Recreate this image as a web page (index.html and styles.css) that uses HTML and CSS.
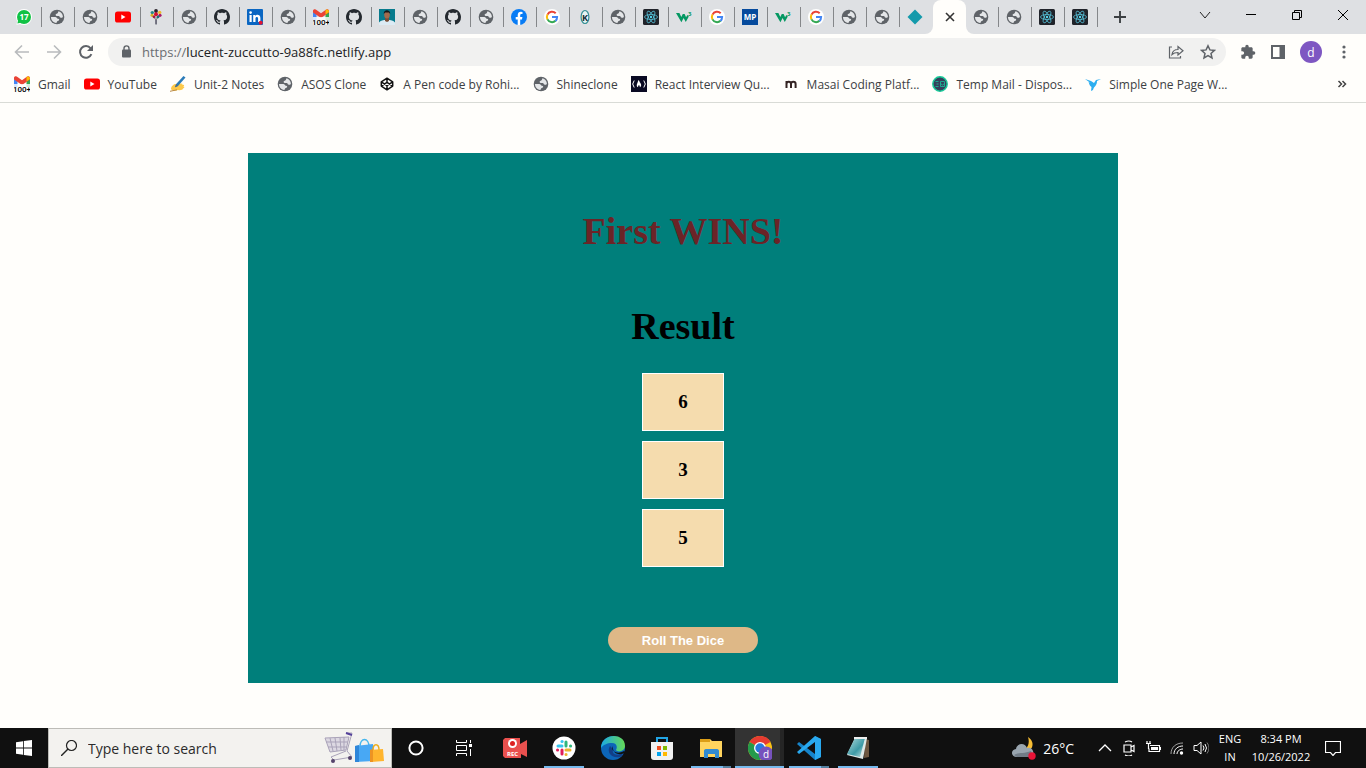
FILE: index.html
```html
<!DOCTYPE html>
<html lang="en">
<head>
<meta charset="utf-8">
<meta name="viewport" content="width=device-width, initial-scale=1">
<title>Roll The Dice</title>
<link rel="stylesheet" href="styles.css">
</head>
<body>
<svg class="sprite" aria-hidden="true">
  <symbol id="globe" viewBox="0 0 16 16"><circle cx="8" cy="8" r="7.300" fill="#5f6368"/><path d="M9.500 2.300c2.500.6 4.300 2.700 4.400 5.200 0 1.200-1.600 1.700-2.600 1.100-.8-.5-.5-1.400-1.500-1.600H7.600c-1.400-.1-1.200-2.100.2-2.200 1.400-.2 1-1.800 1.700-2.500zM2 8h4.300c1.500 0 1.400 1.700 2.700 1.800 1.600.1 1.700 2-.2 2.100-1 .1-.7 1.500-1.600 2C4.200 13.600 2 11.200 2 8z" fill="#e4e6e8"/></symbol>
  <symbol id="github" viewBox="0 0 16 16"><path fill="#24292f" d="M8 0C3.58 0 0 3.58 0 8c0 3.54 2.29 6.53 5.47 7.59.4.07.55-.17.55-.38 0-.19-.01-.82-.01-1.49-2.01.37-2.53-.49-2.69-.94-.09-.23-.48-.94-.82-1.13-.28-.15-.68-.52-.01-.53.63-.01 1.08.58 1.23.82.72 1.21 1.87.87 2.33.66.07-.52.28-.87.51-1.07-1.78-.2-3.64-.89-3.64-3.95 0-.87.31-1.59.82-2.15-.08-.2-.36-1.02.08-2.12 0 0 .67-.21 2.2.82.64-.18 1.32-.27 2-.27s1.36.09 2 .27c1.53-1.04 2.2-.82 2.2-.82.44 1.1.16 1.92.08 2.12.51.56.82 1.27.82 2.15 0 3.07-1.87 3.75-3.65 3.95.29.25.54.73.54 1.48 0 1.07-.01 1.93-.01 2.2 0 .21.15.46.55.38A8.010 8.010 0 0 0 16 8c0-4.42-3.58-8-8-8z"/></symbol>
  <symbol id="youtube" viewBox="0 0 16 16"><rect y="2.500" width="16" height="11" rx="2.600" fill="#f00"/><path d="M6.300 5.600v4.800L10.500 8z" fill="#fff"/></symbol>
  <symbol id="whatsapp" viewBox="0 0 16 16"><circle cx="8" cy="8" r="8" fill="#fff"/><path d="M.4 15.800l1-3.800 3 3z" fill="#fff"/><circle cx="8" cy="8" r="7" fill="#11c245"/><path d="M1.400 14.600l1-4 3 3z" fill="#11c245"/><text x="8" y="11" text-anchor="middle" font-size="8" font-weight="700" fill="#fff">17</text></symbol>
  <symbol id="balloons" viewBox="0 0 16 16"><path d="M4.500 7L8 11l3.500-4M8 8v7" stroke="#777" stroke-width=".8" fill="none"/><circle cx="4.300" cy="3.600" r="1.700" fill="#268a8a"/><circle cx="11.700" cy="3.400" r="1.700" fill="#f0b929"/><circle cx="8" cy="2" r="1.900" fill="#292129"/><circle cx="8" cy="5.200" r="2" fill="#d8122f"/><circle cx="4" cy="6.300" r="1.500" fill="#d6b21c"/><circle cx="12" cy="6.300" r="1.600" fill="#a6196b"/><circle cx="6" cy="7.800" r="1.400" fill="#a41742"/><circle cx="10" cy="7.900" r="1.400" fill="#1c7474"/><path d="M7.200 11h1.700v4.500H7.300z" fill="#667"/></symbol>
  <symbol id="linkedin" viewBox="0 0 16 16"><rect width="16" height="16" rx="1" fill="#0a66c2"/><path d="M2.500 6h2.200v7H2.500zM6.200 6h2.100v1c1.200-1.900 5.100-1.600 5.100 2v4h-2.300V9.500c0-2-2.600-2-2.600 0V13H6.200z" fill="#fff"/><circle cx="3.600" cy="3.600" r="1.300" fill="#fff"/><circle cx="13.700" cy="13.700" r="2" fill="#e11432"/></symbol>
  <symbol id="gmail" viewBox="0 0 16 16"><path d="M0 3l3.500 2v6H0z" fill="#4285f4"/><path d="M16 3l-3.500 2v6H16z" fill="#34a853"/><path d="M0 1.500C.6 0 2.500 0 3.500.9L8 4.200 12.500.9C13.500 0 15.400 0 16 1.500v2L8 9 0 3.500z" fill="#ea4335"/><path d="M12.500 1C14 0 16 .5 16 3l-3.500 2.500z" fill="#fbbc04"/><rect y="8" width="16" height="8" fill="#fff" opacity=".8"/><text class="badge-text" x="8" y="15.500" text-anchor="middle" fill="#000">100+</text></symbol>
  <symbol id="portrait" viewBox="0 0 16 16"><path fill="#087b8d" d="M0 0h16v16H0z"/><path d="M0 16v-2.500c1.500-2 4-2.500 8-2.500s6.500.5 8 2.500V16z" fill="#dcebf4"/><path d="M6 8h4v4l-2 1-2-1z" fill="#7b4f39"/><ellipse cx="8" cy="5.700" rx="2.800" ry="3.800" fill="#a56a4c"/><path d="M4.800 5C4.300 0 11.600 0 11.200 5L10 3.400H6z" fill="#161719"/></symbol>
  <symbol id="facebook" viewBox="0 0 16 16"><circle cx="8" cy="8" r="8" fill="#087cf5"/><path d="M6.700 16v-5.600H4.700V8h2V6.200c0-2.300 1.300-3.400 3.200-3.400l1.600.1V5h-1c-1 0-1.300.6-1.300 1.300V8h2.200l-.4 2.400H9.200V16z" fill="#fff"/></symbol>
  <symbol id="google" viewBox="0 0 16 16"><circle cx="8" cy="8" r="8" fill="#fff"/><path d="M11.700 4.300A5.100 5.100 0 0 0 3.500 5.600" fill="none" stroke="#ea4335" stroke-width="2"/><path d="M3.500 5.500A5.200 5.200 0 0 0 3.500 10.500" fill="none" stroke="#fbbc05" stroke-width="2"/><path d="M3.500 10.400A5.100 5.100 0 0 0 11.500 11.800" fill="none" stroke="#34a853" stroke-width="2"/><path d="M8 8h5.100c0 1.500-.5 2.900-1.600 3.900" fill="none" stroke="#4285f4" stroke-width="2"/></symbol>
  <symbol id="kay" viewBox="0 0 16 16"><ellipse cx="8" cy="8" rx="3.900" ry="6.500" fill="#e7f3f3" stroke="#338e93" stroke-width="1.200"/><text x="8" y="11.500" text-anchor="middle" font-size="9" font-weight="700" fill="#142a34">K</text></symbol>
  <symbol id="react" viewBox="0 0 16 16"><rect width="16" height="16" rx="1.500" fill="#20232a"/><g fill="none" stroke="#55bfd6" stroke-width=".8"><ellipse cx="8" cy="8" rx="6.500" ry="2.500"/><ellipse cx="8" cy="8" rx="6.500" ry="2.500" transform="rotate(60 8 8)"/><ellipse cx="8" cy="8" rx="6.500" ry="2.500" transform="rotate(120 8 8)"/></g><circle cx="8" cy="8" r="1.200" fill="#55d7ee"/></symbol>
  <symbol id="wthree" viewBox="0 0 16 16"><path d="M0 4h3.400l1.900 4 1.500-3h1.800l1.500 3.200L11.300 6l1.500 1.500-3 5.500-2.200-4-2.200 4.200z" fill="#059862"/><text x="12" y="7" font-size="6" font-weight="700" fill="#059862">3</text></symbol>
  <symbol id="mp" viewBox="0 0 16 16"><path fill="#064a9d" d="M0 0h16v16H0z"/><text x="8" y="11" text-anchor="middle" font-size="8" font-weight="700" fill="#fff">MP</text></symbol>
  <symbol id="diamond" viewBox="0 0 16 16"><path d="M8 .5L15.500 8 8 15.500.5 8z" fill="#149aab"/></symbol>
  <symbol id="writing" viewBox="0 0 16 16"><path d="M1 13c0-3 3-5 5-5l5-.5c2 0 2 1 .5 1.500 3-1 3.500.5 1.500 1.500 2 0 1.500 1.700 0 2 0 1.500-3 2-5 1.500-3 1-6 1-7-1z" fill="#fcc94b"/><path d="M0 15.300l7-1.500" stroke="#b98a45"/><path d="M13.500 0l2 1.500L8 10l-3 1.300L6.200 8z" fill="#2b7bb8"/><path d="M5 11.300L6.200 8 8 10z" fill="#506b7f"/></symbol>
  <symbol id="codepen" viewBox="0 0 16 16"><path d="M8 2.200l5.700 3.700v4.200L8 13.800l-5.700-3.700V5.900zM2.300 5.900L8 9.700l5.700-3.800M2.300 10.100L8 6.300l5.700 3.800M8 2.200v4.100M8 9.700v4.100" fill="none" stroke="#111" stroke-width="1.500" stroke-linejoin="round"/></symbol>
  <symbol id="camp" viewBox="0 0 16 16"><path fill="#0a0a23" d="M0 0h16v16H0z"/><path d="M3.200 4.500Q.2 8 3.200 11.500M12.800 4.500q3 3.500 0 7" stroke="#fff" fill="none"/><path d="M7.400 4c1.500 1 .8 2.400 1.800 2.800.8 1 1.800 3-.2 4.500-.4-1-.2-1.600-1-2.300-.8.700-1 1.400-.9 2.300-2.800-1.600-.3-4.300.3-7.300z" fill="#fff"/></symbol>
  <symbol id="masai" viewBox="0 0 16 16"><path d="M3.500 12V5M3.500 8c0-3 4.500-3 4.500 0v4M8 8c0-3 4.600-3 4.600 0v4" fill="none" stroke="#342323" stroke-width="2"/></symbol>
  <symbol id="temp" viewBox="0 0 16 16"><circle cx="8" cy="8" r="7.200" fill="#35405b" stroke="#18ca99" stroke-width="1.500"/><path d="M3.500 5.500h3M4.500 8h2M3.500 10.500h3M8.500 5.500h4v5h-4zM8.500 7.500l2 1.500 2-1.500" fill="none" stroke="#18c39c" stroke-width=".8"/></symbol>
  <symbol id="bird" viewBox="0 0 16 16"><path d="M0 3l6 2 3 2 2-3 5-1-4 2c0 5-3 5-4 9l-2 1 .500-4c-2-1-2-3-3-5l2 1z" fill="#2caef0"/></symbol>
</svg>

<header class="browser">
  <div class="tabstrip">
    <nav class="tabs" aria-label="Open tabs">
      <button class="tab" aria-label="WhatsApp"><svg class="fav"><use href="#whatsapp"/></svg></button>
      <button class="tab" aria-label="Site"><svg class="fav"><use href="#globe"/></svg></button>
      <button class="tab" aria-label="Site"><svg class="fav"><use href="#globe"/></svg></button>
      <button class="tab" aria-label="YouTube"><svg class="fav"><use href="#youtube"/></svg></button>
      <button class="tab" aria-label="Balloons"><svg class="fav"><use href="#balloons"/></svg></button>
      <button class="tab" aria-label="Site"><svg class="fav"><use href="#globe"/></svg></button>
      <button class="tab" aria-label="GitHub"><svg class="fav"><use href="#github"/></svg></button>
      <button class="tab" aria-label="LinkedIn"><svg class="fav"><use href="#linkedin"/></svg></button>
      <button class="tab" aria-label="Site"><svg class="fav"><use href="#globe"/></svg></button>
      <button class="tab" aria-label="Gmail"><svg class="fav"><use href="#gmail"/></svg></button>
      <button class="tab" aria-label="GitHub"><svg class="fav"><use href="#github"/></svg></button>
      <button class="tab" aria-label="Portfolio"><svg class="fav"><use href="#portrait"/></svg></button>
      <button class="tab" aria-label="Site"><svg class="fav"><use href="#globe"/></svg></button>
      <button class="tab" aria-label="GitHub"><svg class="fav"><use href="#github"/></svg></button>
      <button class="tab" aria-label="Site"><svg class="fav"><use href="#globe"/></svg></button>
      <button class="tab" aria-label="Facebook"><svg class="fav"><use href="#facebook"/></svg></button>
      <button class="tab" aria-label="Google"><svg class="fav"><use href="#google"/></svg></button>
      <button class="tab" aria-label="K"><svg class="fav"><use href="#kay"/></svg></button>
      <button class="tab" aria-label="Site"><svg class="fav"><use href="#globe"/></svg></button>
      <button class="tab" aria-label="React"><svg class="fav"><use href="#react"/></svg></button>
      <button class="tab" aria-label="W3Schools"><svg class="fav"><use href="#wthree"/></svg></button>
      <button class="tab" aria-label="Google"><svg class="fav"><use href="#google"/></svg></button>
      <button class="tab" aria-label="MP"><svg class="fav"><use href="#mp"/></svg></button>
      <button class="tab" aria-label="W3Schools"><svg class="fav"><use href="#wthree"/></svg></button>
      <button class="tab" aria-label="Google"><svg class="fav"><use href="#google"/></svg></button>
      <button class="tab" aria-label="Site"><svg class="fav"><use href="#globe"/></svg></button>
      <button class="tab" aria-label="Site"><svg class="fav"><use href="#globe"/></svg></button>
      <button class="tab tab-last" aria-label="Netlify"><svg class="fav"><use href="#diamond"/></svg></button>
      <button class="tab tab-active" aria-label="Close tab"><svg class="fav" viewBox="0 0 16 16"><path d="M4 4l8 8M12 4l-8 8" stroke="#333" stroke-width="1.600"/></svg></button>
      <button class="tab tab-next" aria-label="Site"><svg class="fav"><use href="#globe"/></svg></button>
      <button class="tab" aria-label="Site"><svg class="fav"><use href="#globe"/></svg></button>
      <button class="tab" aria-label="React"><svg class="fav"><use href="#react"/></svg></button>
      <button class="tab" aria-label="React"><svg class="fav"><use href="#react"/></svg></button>
      <button class="new-tab" aria-label="New tab"><svg class="fav" viewBox="0 0 16 16"><path d="M8 2v12M2 8h12" stroke="#3c4043" stroke-width="1.900"/></svg></button>
    </nav>
    <div class="window-controls">
      <button aria-label="Search tabs"><svg class="fav" viewBox="0 0 16 16"><path d="M3 5l5 6 5-6" fill="none" stroke="#222"/></svg></button>
      <button aria-label="Minimize"><svg class="fav" viewBox="0 0 16 16"><path d="M3 7.500h10" stroke="#000"/></svg></button>
      <button aria-label="Restore"><svg class="fav" viewBox="0 0 16 16"><path d="M3.500 5.500h7v7h-7zM5.500 5V3.500h7v7H11" fill="none" stroke="#000"/></svg></button>
      <button aria-label="Close"><svg class="fav" viewBox="0 0 16 16"><path d="M3 3l10 10M13 3L3 13" stroke="#000"/></svg></button>
    </div>
  </div>

  <div class="toolbar">
    <div class="nav-buttons">
      <button aria-label="Back"><svg class="fav" viewBox="0 0 16 16"><path d="M15 8H2M8 1.500L1.500 8 8 14.500" fill="none" stroke="#b9bbbd" stroke-width="1.600"/></svg></button>
      <button aria-label="Forward"><svg class="fav" viewBox="0 0 16 16"><path d="M1 8h13M8 1.500L14.500 8 8 14.500" fill="none" stroke="#b9bbbd" stroke-width="1.600"/></svg></button>
      <button aria-label="Reload"><svg class="fav" viewBox="0 0 16 16"><path d="M13.400 10.200A5.900 5.900 0 1 1 12.600 4.300" fill="none" stroke="#5f6368" stroke-width="2"/><path d="M15 1v6H9z" fill="#5f6368"/></svg></button>
    </div>
    <div class="omnibox">
      <svg class="fav" viewBox="0 0 16 16"><rect x="4" y="5.500" width="9" height="8" rx="1" fill="#5f6368"/><path d="M6 6V4.400a2.500 2.500 0 0 1 5 0V6" fill="none" stroke="#5f6368" stroke-width="1.400"/></svg>
      <div class="url" aria-label="Address"><span>https://</span>lucent-zuccutto-9a88fc.netlify.app</div>
      <button aria-label="Share"><svg class="fav" viewBox="0 0 16 16"><path d="M4 3H1.500v11h11v-2M4 10.500c.5-3.500 2.500-5 6-5V2.500l5 4.200-5 4.300V8.500c-3 0-4.500.5-6 2z" fill="none" stroke="#5f6368" stroke-width="1.200"/></svg></button>
      <button aria-label="Bookmark"><svg class="fav" viewBox="0 0 16 16"><path d="M8 1.800l1.900 4.100 4.500.5-3.400 3 1 4.500L8 11.600l-4 2.300 1-4.500-3.400-3 4.500-.5z" fill="none" stroke="#5f6368" stroke-width="1.500"/></svg></button>
    </div>
    <div class="tools">
      <button aria-label="Extensions"><svg class="fav" viewBox="0 0 24 24"><path fill="#5f6368" d="M20.500 11H19V7c0-1.100-.9-2-2-2h-4V3.500a2.500 2.500 0 0 0-5 0V5H4c-1.100 0-2 .9-2 2v3.800h1.500a2.700 2.700 0 0 1 0 5.400H2V20c0 1.100.9 2 2 2h3.800v-1.500a2.700 2.700 0 0 1 5.400 0V22H17c1.100 0 2-.9 2-2v-4h1.500a2.500 2.500 0 0 0 0-5z"/></svg></button>
      <button aria-label="Side panel"><svg class="fav" viewBox="0 0 16 16"><path d="M2 2h12v12H2z" fill="none" stroke="#5f6368" stroke-width="2"/><path d="M9.500 2H14v12H9.500z" fill="#5f6368"/></svg></button>
      <button class="avatar" aria-label="Profile">d</button>
      <button aria-label="Menu"><svg class="fav" viewBox="0 0 16 16"><g fill="#5f6368"><circle cx="8" cy="3" r="1.600"/><circle cx="8" cy="8" r="1.600"/><circle cx="8" cy="13" r="1.600"/></g></svg></button>
    </div>
  </div>

  <nav class="bookmarks" aria-label="Bookmarks">
    <a href="#"><svg class="fav"><use href="#gmail"/></svg>Gmail</a>
    <a href="#"><svg class="fav"><use href="#youtube"/></svg>YouTube</a>
    <a href="#"><svg class="fav"><use href="#writing"/></svg>Unit-2 Notes</a>
    <a href="#"><svg class="fav"><use href="#globe"/></svg>ASOS Clone</a>
    <a href="#"><svg class="fav"><use href="#codepen"/></svg>A Pen code by Rohi...</a>
    <a href="#"><svg class="fav"><use href="#globe"/></svg>Shineclone</a>
    <a href="#"><svg class="fav"><use href="#camp"/></svg>React Interview Qu...</a>
    <a href="#"><svg class="fav"><use href="#masai"/></svg>Masai Coding Platf...</a>
    <a href="#"><svg class="fav"><use href="#temp"/></svg>Temp Mail - Dispos...</a>
    <a href="#"><svg class="fav"><use href="#bird"/></svg>Simple One Page W...</a>
    <button class="overflow" aria-label="More bookmarks"><svg class="fav" viewBox="0 0 16 16"><path d="M4.500 5l3 3-3 3M8.500 5l3 3-3 3" fill="none" stroke="#444" stroke-width="1.500"/></svg></button>
  </nav>
</header>

<main class="page">
  <section class="game">
    <h1 class="winner">First WINS!</h1>
    <h1 class="heading">Result</h1>
    <div class="dice">
      <div class="die">6</div>
      <div class="die">3</div>
      <div class="die">5</div>
    </div>
    <button class="roll">Roll The Dice</button>
  </section>
</main>

<footer class="taskbar">
  <button class="start" aria-label="Start"><svg class="fav" viewBox="0 0 16 16"><path d="M0 2.200l7-1v6.400H0zM7.800 1.100L16 0v7.600H7.800zM0 8.400h7v6.400l-7-1zM7.800 8.400H16V16l-8.200-1.100z" fill="#fff"/></svg></button>
  <div class="search">
    <svg class="fav" viewBox="0 0 16 16"><circle cx="10.500" cy="5.500" r="5" fill="none" stroke="#222" stroke-width="1.200"/><path d="M7 9L0 16" stroke="#222" stroke-width="1.400"/></svg>
    <input type="text" aria-label="Search" placeholder="Type here to search">
    <svg class="shopping" viewBox="0 0 60 32"><path d="M1 6l24-1-3 13-16 2z" fill="#dcd8e2"/><path d="M1 6l24-1-3 13-16 2zM2 10h22M4 15h19M6 6l3 13M11 6l2 13M16 6l1 12M20 5v13M22 1h6l-5 18 5 6-18 3-3-3 15-6" fill="none" stroke="#aaa3b9"/><path d="M22 1l6 2" stroke="#54419a" stroke-width="2"/><circle cx="9" cy="29" r="2" fill="#54436b"/><circle cx="26" cy="26" r="2" fill="#54436b"/><path d="M36 15c0-10 9-10 9 0" fill="none" stroke="#45b6ed" stroke-width="1.500"/><path d="M31 14l18-2 1 17-19 1z" fill="#48a8f4"/><path d="M31 14l4-1v17h-4z" fill="#2e86d9"/><path d="M49 18c0-7 6-7 6 0" fill="none" stroke="#efad18" stroke-width="1.500"/><path d="M46 18l13-1 1 12-13 1z" fill="#ffb52e"/><path d="M46 18l3-1v13h-3z" fill="#ed9423"/></svg>
  </div>
  <button class="shell" aria-label="Cortana"><svg class="fav" viewBox="0 0 16 16"><circle cx="8" cy="8" r="6.600" fill="none" stroke="#fff" stroke-width="2"/></svg></button>
  <button class="shell" aria-label="Task view"><svg class="fav" viewBox="0 0 16 16"><path d="M.5 0v2.500h10V0M.5 5.500h10v5H.5zM.5 16v-2.500h10V16M14.500 0v3M14.500 9v7" fill="none" stroke="#fff"/><path d="M13 4h3v3h-3z" fill="#fff"/></svg></button>
  <div class="apps">
    <button class="app" aria-label="Recorder"><svg class="app-icon" viewBox="0 0 24 24"><path d="M2 2h15v6l7-4v17l-6-3v4H2L0 20V4z" fill="#e9504e"/><circle cx="9.500" cy="7.500" r="4.500" fill="#fff"/><circle cx="9.500" cy="7.500" r="2.500" fill="#d22"/><text x="9.500" y="20" text-anchor="middle" font-size="6" font-weight="700" fill="#fff">REC</text></svg></button>
    <button class="app open" aria-label="Slack"><svg class="app-icon" viewBox="0 0 24 24"><circle cx="12" cy="12" r="11.500" fill="#fff"/><g fill="none" stroke-width="3" stroke-linecap="round"><path d="M6 10h4" stroke="#36c5f0"/><path d="M10 5.500h.1" stroke="#36c5f0"/><path d="M14 6v4" stroke="#2eb67d"/><path d="M18.500 10h.1" stroke="#2eb67d"/><path d="M14 14h4M14 18.500h.1" stroke="#ecb22e"/><path d="M10 14v4M5.500 14h.1" stroke="#e01e5a"/></g></svg></button>
    <button class="app" aria-label="Edge"><svg class="app-icon" viewBox="0 0 24 24"><defs><linearGradient id="edge-top"><stop stop-color="#1ba9e4"/><stop offset="1" stop-color="#65d957"/></linearGradient></defs><circle cx="12" cy="12" r="12" fill="#0c65b8"/><path d="M0 12C0-3 24-4 24 10c0 5-7 7-9 4 2-4 0-7-4-7C6 7 2 9 0 12z" fill="url(#edge-top)"/><path d="M9 10c-4 6 2 13 10 11 3-1 3-4 1-3-7 2-9-1-8-5z" fill="#123e87"/><path d="M12 10c-3 5 4 9 11 5l2 2c-8 3-14 0-13-7z" fill="#101010"/></svg></button>
    <button class="app" aria-label="Store"><svg class="app-icon" viewBox="0 0 24 24"><path d="M7 7V2h10v5" fill="none" stroke="#22a5e5" stroke-width="2"/><path d="M1 6h22v15c0 2-1 3-3 3H4c-2 0-3-1-3-3z" fill="#f1f1f1"/><path d="M7 10h4v4H7z" fill="#f25022"/><path d="M13 10h4v4h-4z" fill="#7fba00"/><path d="M7 16h4v4H7z" fill="#00a4ef"/><path d="M13 16h4v4h-4z" fill="#ffb900"/></svg></button>
    <button class="app open multi" aria-label="File Explorer"><svg class="app-icon" viewBox="0 0 24 24"><path d="M1 3h10l2 2h10v16H1z" fill="#ffd45e"/><path d="M1 3h10v3H1z" fill="#dc9e17"/><path d="M5 22v-7c0-1 .5-2 2-2h11c1.500 0 2 1 2 2v7h-4v-4H9v4z" fill="#328bd0"/></svg></button>
    <button class="app open multi current" aria-label="Chrome"><svg class="app-icon" viewBox="0 0 24 24"><circle cx="12" cy="12" r="12" fill="#fbc116"/><path d="M12 12L1.600 6A12 12 0 0 1 22.400 6z" fill="#e53b31"/><path d="M12 12L1.600 6A12 12 0 0 0 12 24l5-9z" fill="#249b4b"/><circle cx="12" cy="12" r="6" fill="#fff"/><circle cx="12" cy="12" r="4.700" fill="#2779df"/><circle cx="18" cy="18" r="7.500" fill="#7652bd"/><text x="18" y="21.500" text-anchor="middle" font-size="10" fill="#fff">d</text></svg></button>
    <button class="app open multi" aria-label="Visual Studio Code"><svg class="app-icon" viewBox="0 0 24 24"><path d="M18 0l6 3v18l-6 3L0 8l2-2 16 12z" fill="#1684ca"/><path d="M18 0l6 3v18l-6 3V6L2 18l-2-2z" fill="#29a9ef"/></svg></button>
    <button class="app open" aria-label="Notepad"><svg class="app-icon" viewBox="0 0 24 24"><defs><linearGradient id="note" x2="1" y2="1"><stop stop-color="#b7dedf"/><stop offset=".6" stop-color="#3c9aa6"/><stop offset="1" stop-color="#c9e6e6"/></linearGradient></defs><path d="M19 3l4 1v17l-5 1z" fill="#6d5640"/><path d="M9 2h12l-4 21L1 19z" fill="#dfe9e8"/><path d="M9 2h10l-5 19L1 18z" fill="url(#note)"/><path d="M8 2h13" stroke="#eee" stroke-width="2"/></svg></button>
  </div>
  <div class="tray">
    <div class="weather"><svg class="app-icon" viewBox="0 0 24 24"><path d="M16 1c8 5 5 16-5 14 5-3 7-8 5-14z" fill="#f8be34"/><path d="M5 21c-6 0-7-7-1-8 1-6 9-7 11-1 7-2 9 9 2 9z" fill="#99a5af"/><path d="M2 19c4-3 10-1 17-4 2 4 0 6-3 6H5z" fill="#717c87"/><circle cx="20" cy="20" r="3.700" fill="#e81437"/></svg><span>26°C</span></div>
    <div class="status">
      <button aria-label="Show hidden icons"><svg class="fav" viewBox="0 0 16 16"><path d="M2 11l6-6 6 6" fill="none" stroke="#fff" stroke-width="1.300"/></svg></button>
      <button aria-label="Meet now"><svg class="fav" viewBox="0 0 16 16"><path d="M3 5h7v7H3zM10 7l3-1.500v6L10 10M4 2q4-2 7 0M4 15q4 2 7 0" fill="none" stroke="#fff" stroke-width="1.200"/></svg></button>
      <button aria-label="Battery"><svg class="fav" viewBox="0 0 16 16"><path d="M5 5.500h9.500v6H4v-3M1 3.500h5M2 1v3M5 1v3M3.500 4v5" fill="none" stroke="#fff" stroke-width="1.200"/><path d="M6 7h7v3H6zM15 7h1v3h-1z" fill="#fff"/></svg></button>
      <button aria-label="Wi-Fi"><svg class="fav" viewBox="0 0 16 16"><g fill="none" stroke="#fff"><path d="M2 14C2 7 7 3 14 3" opacity=".6"/><path d="M5 14c0-5 4-8 9-8M8 14c0-3 3-5 6-5"/></g><circle cx="12.500" cy="13" r="1.700" fill="#fff"/></svg></button>
      <button aria-label="Volume"><svg class="fav" viewBox="0 0 16 16"><path d="M1 5.500h3L8 2v12l-4-3.500H1zM10 5.500q2 2.500 0 5M12 4q3 4 0 8" fill="none" stroke="#fff"/><path d="M14 2.500q4 5.500 0 11" fill="none" stroke="#777"/></svg></button>
    </div>
    <div class="stack lang"><span>ENG</span><span>IN</span></div>
    <div class="stack clock"><span>8:34 PM</span><span>10/26/2022</span></div>
    <button class="notify" aria-label="Notifications"><svg class="fav" viewBox="0 0 16 16"><path d="M.5 1.500h15v11h-5L8 15.500l-2.500-3h-5z" fill="none" stroke="#fff" stroke-width="1.200"/></svg></button>
  </div>
</footer>
</body>
</html>
```
FILE: styles.css
```css
* { box-sizing: border-box; }

body {
  margin: 0;
  min-height: 100vh;
  display: flex;
  flex-direction: column;
  background: #fffefb;
  font-family: "Open Sans", "Noto Sans", sans-serif;
  font-size: 12px;
  color: #3c4043;
}

button {
  margin: 0;
  padding: 0;
  border: 0;
  background: none;
  font: inherit;
  color: inherit;
  display: flex;
  align-items: center;
  justify-content: center;
  flex: none;
}

svg { display: block; flex: none; }
.sprite { display: none; }
.fav { width: 16px; height: 16px; }
.badge-text { font: 500 8px Roboto, sans-serif; }

/* Browser frame */
.browser { border-bottom: 1px solid #d9dbd6; }

.tabstrip {
  display: flex;
  justify-content: space-between;
  height: 34px;
  background: linear-gradient(#dee0e3 26px, #fffefb 26px);
}

.tabs {
  display: flex;
  padding-left: 9px;
  background: linear-gradient(#dee0e3, #dee0e3) 0 0 / 9px 100% no-repeat;
}

.tab {
  width: 33px;
  height: 34px;
  justify-content: flex-start;
  padding-left: 7px;
  background: linear-gradient(#85878a, #85878a) right 7px / 1px 20px no-repeat #dee0e3;
}

.tab-last {
  background: #dee0e3;
  border-bottom-right-radius: 8px;
}

.tab-next { border-bottom-left-radius: 8px; }

.tab-active {
  justify-content: center;
  padding-left: 1px;
  background: #fffefb;
  border-radius: 8px 8px 0 0;
}

.new-tab { width: 43px; height: 34px; background: #dee0e3; }

.window-controls {
  flex: 1;
  display: flex;
  justify-content: flex-end;
  background: #dee0e3;
}
.window-controls button { width: 46px; height: 29px; }

.toolbar {
  display: flex;
  align-items: center;
  height: 36px;
}

.nav-buttons { display: flex; gap: 16px; padding: 0 14px; }

.omnibox {
  flex: 1;
  display: flex;
  align-items: center;
  gap: 16px;
  height: 28px;
  padding: 0 10px;
  border-radius: 14px;
  background: #f1f1f0;
}

.url {
  flex: 1;
  margin-left: -8px;
  font-size: 13px;
  color: #202124;
}
.url span { color: #6b6e72; }

.tools {
  display: flex;
  align-items: center;
  gap: 14px;
  padding: 0 14px;
}

.avatar {
  width: 22px;
  height: 22px;
  border-radius: 50%;
  background: #7e57c2;
  color: #fff;
}

.bookmarks {
  display: flex;
  align-items: center;
  gap: 13px;
  height: 32px;
  padding: 0 16px 4px 14px;
}

.bookmarks a {
  display: flex;
  align-items: center;
  gap: 8px;
  color: inherit;
  text-decoration: none;
  white-space: nowrap;
}

.overflow { margin-left: auto; }

/* Game */
.page {
  flex: 1;
  padding: 50px 16px 45px;
  font-family: "Liberation Serif", "Times New Roman", serif;
}

.game {
  max-width: 870px;
  margin: 0 auto;
  padding: 56px 16px 30px;
  display: flex;
  flex-direction: column;
  align-items: center;
  background: #007f7b;
  color: #000;
}

.game h1 {
  margin: 0;
  font-size: 38px;
  line-height: 44px;
}
.game .winner { margin-bottom: 51px; color: #6b2427; }

.dice {
  display: flex;
  flex-direction: column;
  gap: 10px;
  margin: 25px 0 60px;
}

.die {
  width: 82px;
  padding: 18px 0;
  border: 1px solid #fff;
  background: #f5dcae;
  font-size: 19px;
  line-height: 20px;
  font-weight: 700;
  text-align: center;
}

.roll {
  width: 150px;
  height: 26px;
  border-radius: 13px;
  background: #deb887;
  color: #fff;
  font: 700 13px "Liberation Sans", Arial, sans-serif;
}

/* Taskbar */
.taskbar {
  display: flex;
  height: 40px;
  background: #101010;
  color: #fff;
}

.start, .shell { width: 48px; }

.search {
  width: 344px;
  display: flex;
  align-items: center;
  gap: 11px;
  padding: 0 7px 0 12px;
  border: 1px solid #bdbcb7;
  background: #f3f2ef;
}

.search input {
  flex: 1;
  min-width: 0;
  border: 0;
  padding: 0;
  background: none;
  font: 14px "Open Sans", "Noto Sans", sans-serif;
  color: #2b2b2b;
}
.search input::placeholder { color: #2b2b2b; opacity: 1; }

.shopping { width: 60px; height: 32px; }

.apps { display: flex; padding-left: 2px; }
.app { width: 49px; }
.app-icon { width: 24px; height: 24px; }
.open { background: linear-gradient(#76b9ed, #76b9ed) 5px 100% / 40px 2px no-repeat; }
.multi {
  background:
    linear-gradient(90deg, #76b9ed 32px, #54809f 32px) 5px 100% / 40px 2px no-repeat;
}
.current {
  background:
    linear-gradient(#76b9ed, #76b9ed) 0 100% / 100% 2px no-repeat,
    linear-gradient(90deg, #333 45px, #252525 45px);
}

.tray {
  flex: 1;
  display: flex;
  justify-content: flex-end;
  align-items: center;
  padding-right: 25px;
}

.weather {
  display: flex;
  align-items: center;
  gap: 7px;
  margin-right: 23px;
  font-size: 14px;
}

.status { display: flex; gap: 8px; margin-right: 8px; }

.stack {
  display: flex;
  flex-direction: column;
  align-items: center;
  font-size: 11px;
  line-height: 18px;
}
.lang { width: 26px; }
.clock { width: 58px; margin: 0 15px 0 9px; }
```
